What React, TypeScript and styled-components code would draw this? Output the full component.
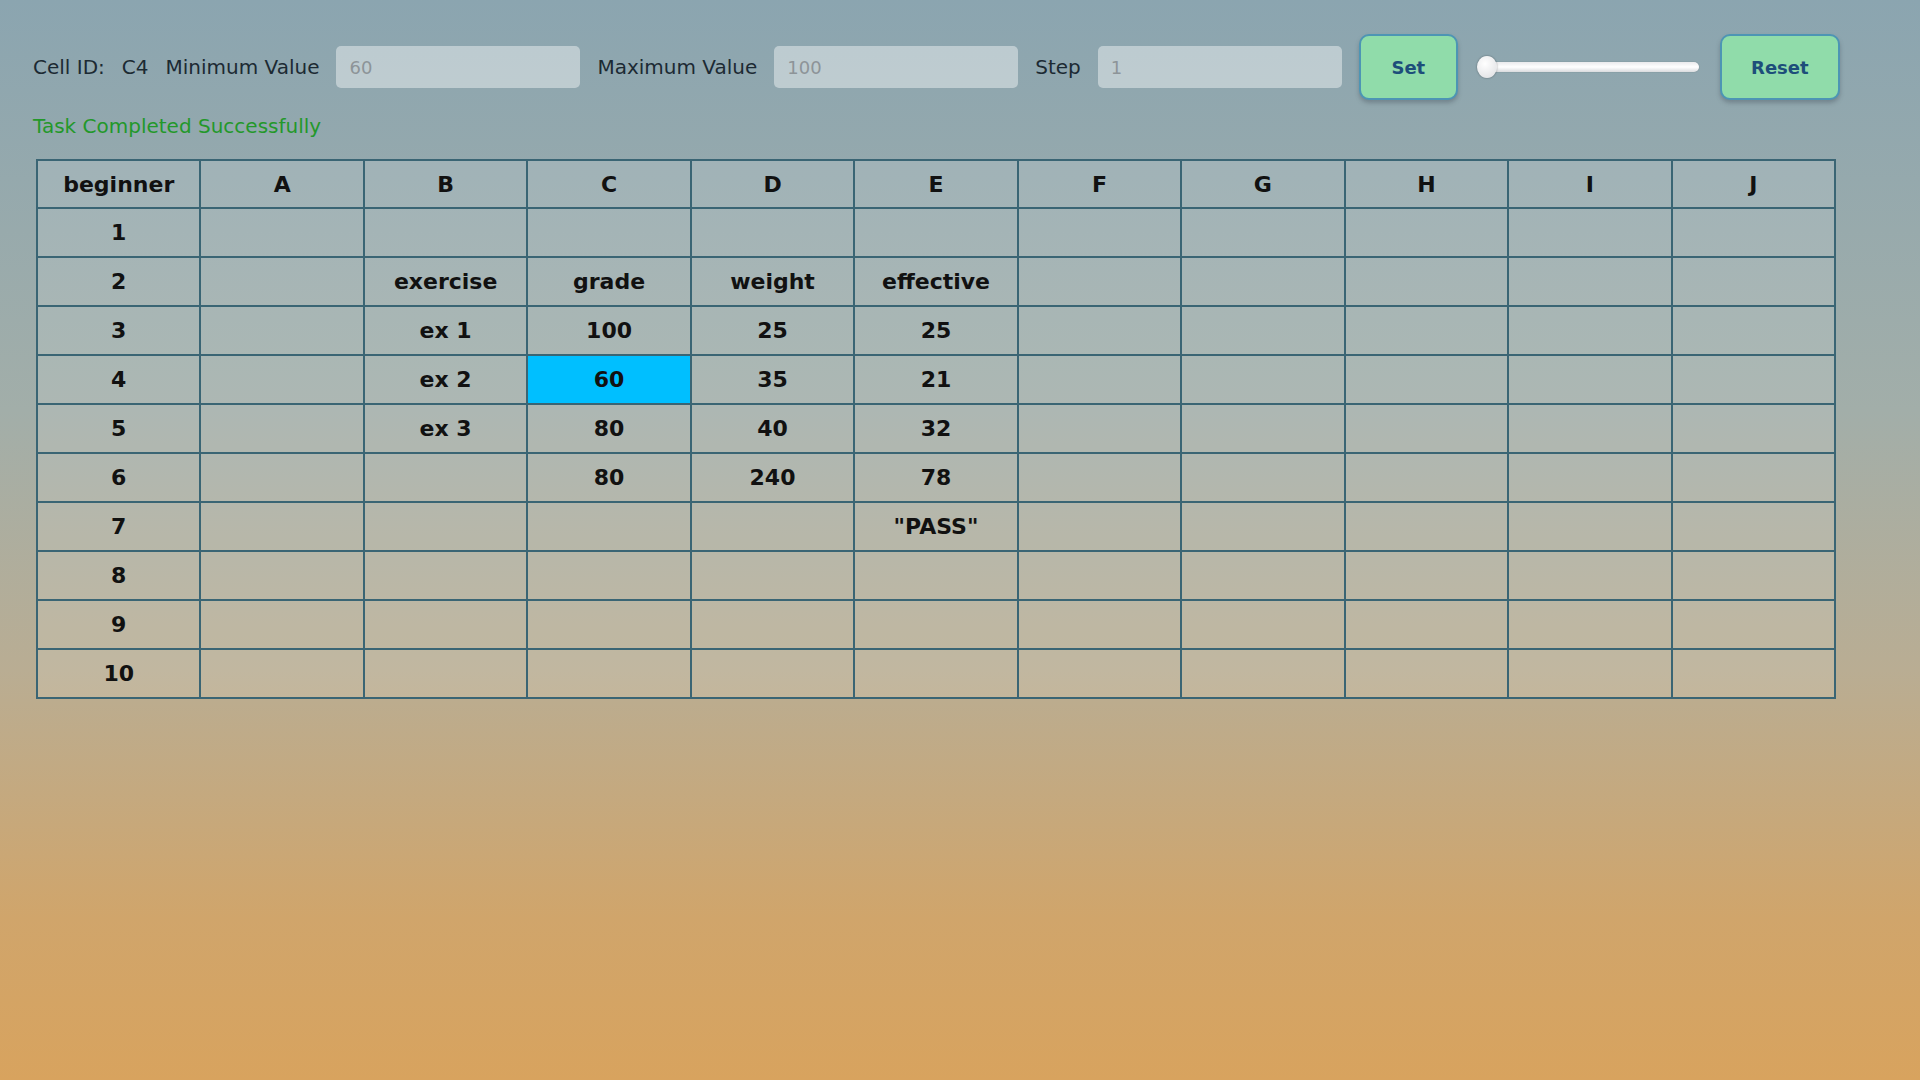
import React, { ReactElement } from 'react'
import styled, { createGlobalStyle } from 'styled-components'

const GlobalStyle = createGlobalStyle`
  html, body {
    margin: 0;
    padding: 0;
  }
  body {
    min-height: 100vh;
    font-family: 'DejaVu Sans', Verdana, sans-serif;
    background: linear-gradient(to bottom, #8ba5b0 0%, #a2aea9 38%, #b9ad93 62%, #d0a56b 85%, #d8a35e 100%);
    background-attachment: fixed;
  }
`

const Page = styled.div`
  min-height: 100vh;
  padding: 34px 0 0 33px;
  box-sizing: border-box;
`

const Toolbar = styled.div`
  display: flex;
  align-items: center;
  gap: 17px;
  height: 66px;
`

const Label = styled.span`
  font-size: 20px;
  color: #1c2a33;
  white-space: nowrap;
`

const ValueInput = styled.input`
  width: 244px;
  height: 42px;
  box-sizing: border-box;
  border: none;
  border-radius: 5px;
  padding: 0 13px;
  background: rgba(255, 255, 255, 0.42);
  font-family: 'DejaVu Sans', Verdana, sans-serif;
  font-size: 18px;
  color: #333;
  outline: none;

  &::placeholder {
    color: #8d9498;
  }
`

const ActionButton = styled.button<{ $width: number }>`
  width: ${props => props.$width}px;
  height: 66px;
  border: 2px solid #4d95b4;
  border-radius: 10px;
  background: #90dcaa;
  color: #1d4e7a;
  font-family: 'DejaVu Sans', Verdana, sans-serif;
  font-weight: bold;
  font-size: 18px;
  box-shadow: 0 3px 4px rgba(60, 70, 80, 0.35);
  cursor: pointer;
`

const SliderWrap = styled.div`
  position: relative;
  width: 222px;
  height: 24px;
  margin: 0 4px 0 2px;
`

const Track = styled.div`
  position: absolute;
  left: 8px;
  right: 0;
  top: 7px;
  height: 10px;
  border-radius: 5px;
  background: linear-gradient(to bottom, #e9eaec, #ffffff 50%, #d9dbde);
  box-shadow: 0 0 1px rgba(0, 0, 0, 0.35);
`

const Thumb = styled.div`
  position: absolute;
  left: 0;
  top: 1px;
  width: 20px;
  height: 22px;
  border-radius: 50%;
  background: radial-gradient(circle at 40% 35%, #ffffff, #dcdde0);
  box-shadow: 0 0 2px rgba(0, 0, 0, 0.45);
`

const Status = styled.div`
  margin-top: 14px;
  font-size: 20px;
  line-height: 24px;
  color: #23982a;
`

const Grid = styled.table`
  margin: 21px 0 0 3px;
  border-collapse: collapse;
  table-layout: fixed;
  width: 1800px;
`

const Row = styled.tr<{ $head?: boolean }>`
  height: ${props => (props.$head ? 48 : 49)}px;
`

const Cell = styled.td<{ $active?: boolean }>`
  border: 2px solid #3a6574;
  padding: 0;
  text-align: center;
  vertical-align: middle;
  font-size: 22px;
  font-weight: bold;
  color: #111;
  background: ${props => (props.$active ? '#00bfff' : 'rgba(255, 255, 255, 0.12)')};
`

const columns = ['A', 'B', 'C', 'D', 'E', 'F', 'G', 'H', 'I', 'J']

const data: Record<string, string> = {
  B2: 'exercise',
  C2: 'grade',
  D2: 'weight',
  E2: 'effective',
  B3: 'ex 1',
  C3: '100',
  D3: '25',
  E3: '25',
  B4: 'ex 2',
  C4: '60',
  D4: '35',
  E4: '21',
  B5: 'ex 3',
  C5: '80',
  D5: '40',
  E5: '32',
  C6: '80',
  D6: '240',
  E6: '78',
  E7: '"PASS"',
}

const activeCell = 'C4'

const App = (): ReactElement => {
  const rows = Array.from({ length: 10 }, (_, i) => i + 1)

  return (
    <Page>
      <GlobalStyle />
      <Toolbar>
        <Label>Cell ID:</Label>
        <Label>{activeCell}</Label>
        <Label>Minimum Value</Label>
        <ValueInput placeholder='60' />
        <Label>Maximum Value</Label>
        <ValueInput placeholder='100' />
        <Label>Step</Label>
        <ValueInput placeholder='1' />
        <ActionButton $width={99}>Set</ActionButton>
        <SliderWrap>
          <Track />
          <Thumb />
        </SliderWrap>
        <ActionButton $width={120}>Reset</ActionButton>
      </Toolbar>
      <Status>Task Completed Successfully</Status>
      <Grid>
        <tbody>
          <Row $head>
            <Cell as='th'>beginner</Cell>
            {columns.map(col => (
              <Cell as='th' key={col}>
                {col}
              </Cell>
            ))}
          </Row>
          {rows.map(r => (
            <Row key={r}>
              <Cell>{r}</Cell>
              {columns.map(col => {
                const id = `${col}${r}`
                return (
                  <Cell key={id} $active={id === activeCell}>
                    {data[id] ?? ''}
                  </Cell>
                )
              })}
            </Row>
          ))}
        </tbody>
      </Grid>
    </Page>
  )
}

export default App
